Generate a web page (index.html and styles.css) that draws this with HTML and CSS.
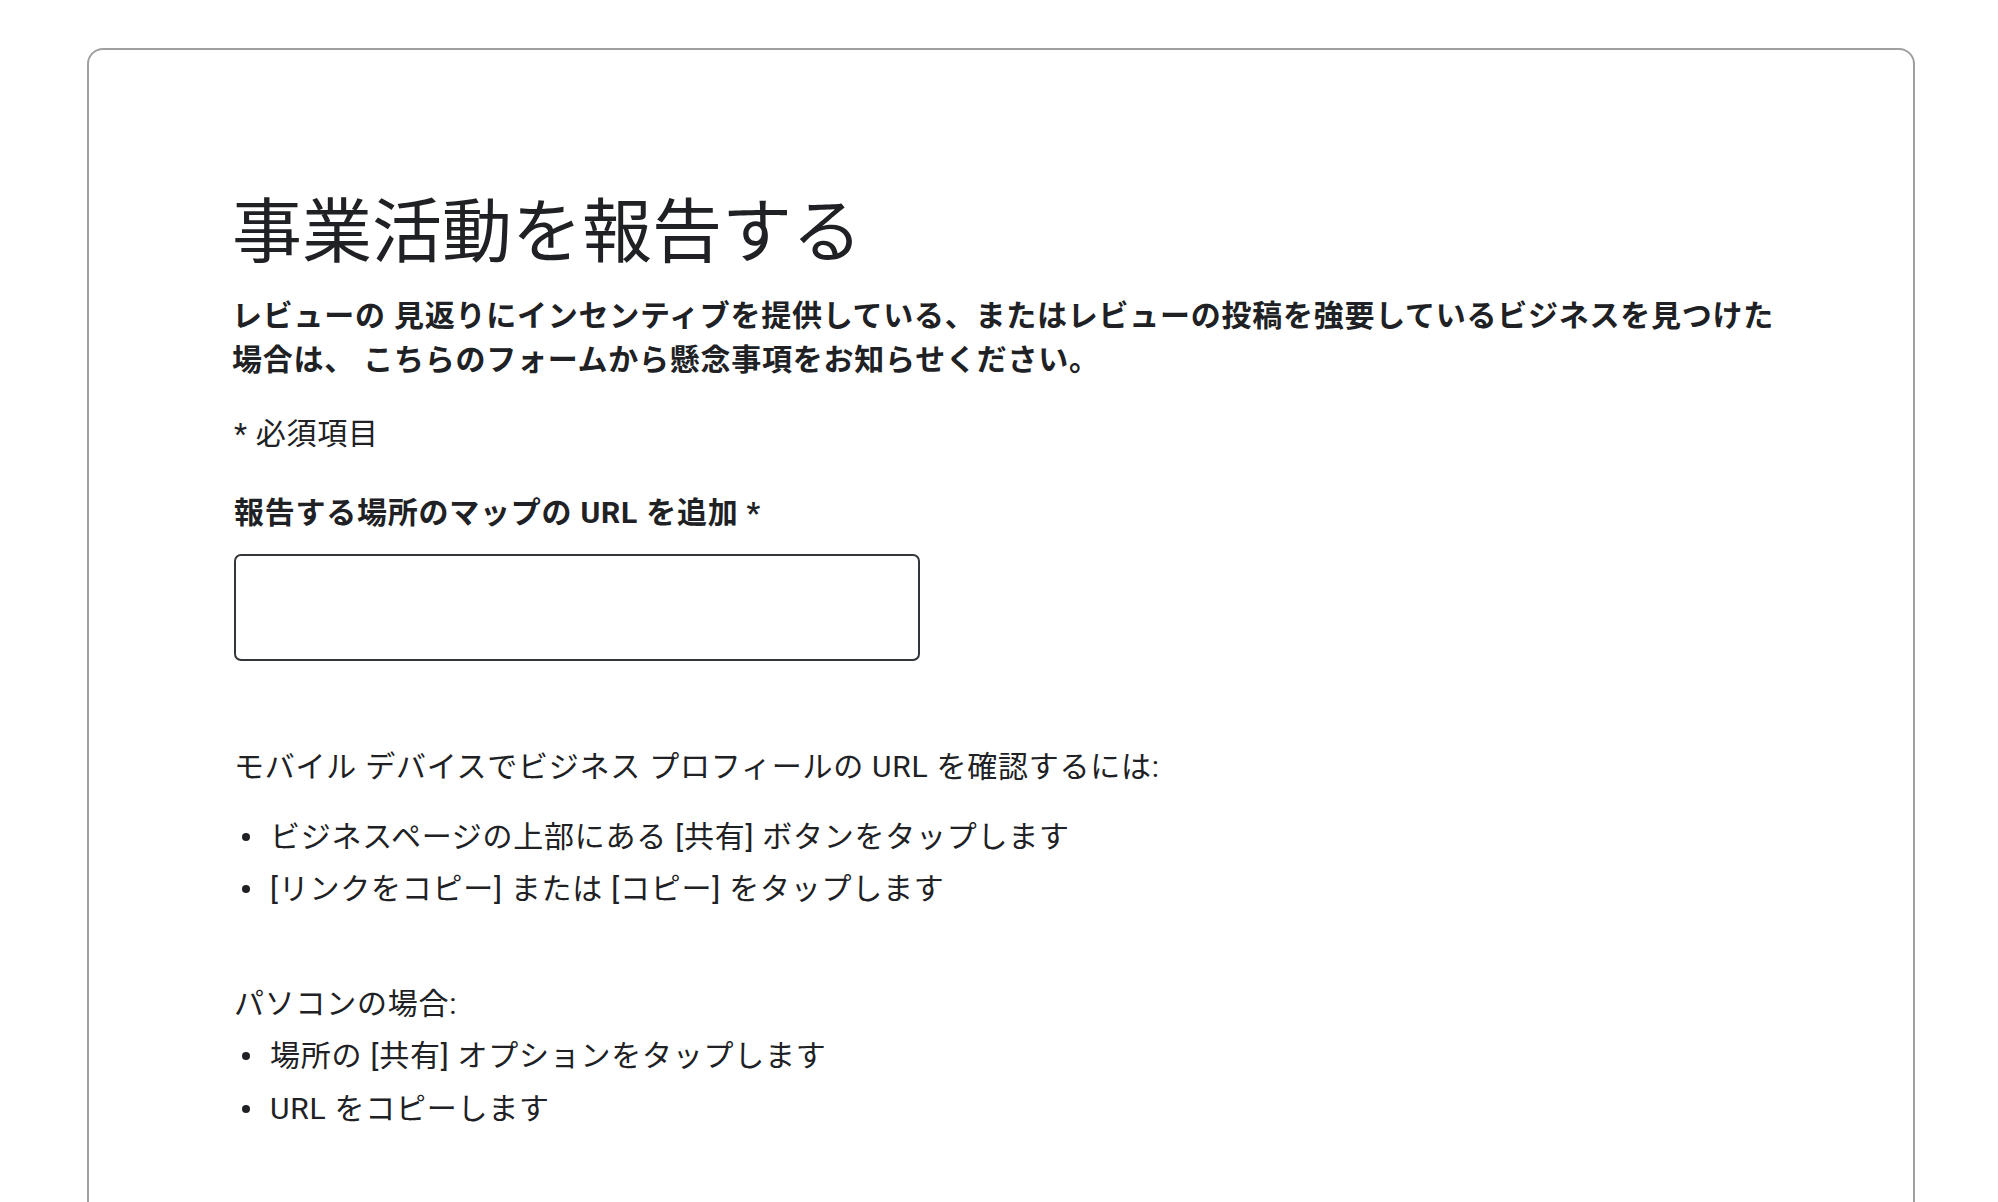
FILE: index.html
```html
<!DOCTYPE html>
<html lang="ja">
<head>
<meta charset="utf-8">
<title>事業活動を報告する</title>
<link rel="stylesheet" href="styles.css">
</head>
<body>
<main class="page">
  <section class="card">
    <h1 class="title">事業活動を報告する</h1>
    <p class="lead">レビューの 見返りにインセンティブを提供している、またはレビューの投稿を強要しているビジネスを見つけた場合は、 こちらのフォームから懸念事項をお知らせください。</p>
    <p class="required">* 必須項目</p>
    <label class="field-label" for="url">報告する場所のマップの URL を追加 *</label>
    <input class="field-input" id="url" type="text">
    <p class="help mobile">モバイル デバイスでビジネス プロフィールの URL を確認するには:</p>
    <ul class="steps">
      <li>ビジネスページの上部にある [共有] ボタンをタップします</li>
      <li>[リンクをコピー] または [コピー] をタップします</li>
    </ul>
    <p class="help pc">パソコンの場合:</p>
    <ul class="steps steps-pc">
      <li>場所の [共有] オプションをタップします</li>
      <li>URL をコピーします</li>
    </ul>
  </section>
</main>
</body>
</html>
```

FILE: styles.css
```css
html, body {
  margin: 0;
  padding: 0;
  background: #ffffff;
}

body {
  font-family: "Roboto", "Noto Sans CJK JP", sans-serif;
  color: #202124;
}

.page {
  padding: 48px 83px 0 87px;
}

.card {
  border: 2px solid #a0a0a0;
  border-radius: 16px;
  padding: 141px 125px 200px 143px;
  display: flex;
  flex-direction: column;
  align-items: flex-start;
  min-height: 1100px;
}

.title {
  margin: 0;
  font-size: 70px;
  font-weight: 400;
  line-height: 84px;
}

.lead,
.required,
.field-label,
.help,
.steps li {
  font-size: 30px;
  letter-spacing: 0.75px;
}

.lead {
  margin: 19px 0 0 0;
  font-weight: 700;
  line-height: 44px;
}

.required {
  margin: 30px 0 0 2px;
  line-height: 44px;
}

.field-label {
  margin: 35px 0 0 2px;
  font-weight: 700;
  line-height: 44px;
}

.field-input {
  margin: 19px 0 0 2px;
  width: 686px;
  height: 107px;
  box-sizing: border-box;
  border: 2px solid #333639;
  border-radius: 7px;
  background: #fff;
  font-size: 30px;
  padding: 0 16px;
  outline: none;
}

.help {
  margin: 84px 0 0 2px;
  line-height: 44px;
}

.help.pc {
  margin-top: 67px;
}

.steps {
  list-style: none;
  margin: 22px 0 0 2px;
  padding: 0;
}

.steps-pc {
  margin-top: 3px;
}

.steps li {
  display: flex;
  align-items: center;
  line-height: 52px;
}

.steps-pc li {
  line-height: 53px;
}

.steps li::before {
  content: "";
  width: 8px;
  height: 8px;
  border-radius: 50%;
  background: #202124;
  margin: 0 20px 0 8px;
  flex: none;
}
```
